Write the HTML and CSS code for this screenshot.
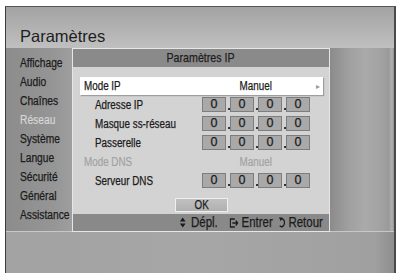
FILE: index.html
```html
<!DOCTYPE html>
<html lang="fr">
<head>
<meta charset="utf-8">
<title>Paramètres IP</title>
<link rel="stylesheet" href="styles.css">
</head>
<body>
<div class="screen">
  <div class="title">Paramètres</div>
  <div class="middle">
    <nav class="menu">
      <div class="item">Affichage</div>
      <div class="item">Audio</div>
      <div class="item">Chaînes</div>
      <div class="item dim">Réseau</div>
      <div class="item">Système</div>
      <div class="item">Langue</div>
      <div class="item">Sécurité</div>
      <div class="item">Général</div>
      <div class="item">Assistance</div>
    </nav>
    <div class="dialog">
      <div class="dlg-head"><span class="cond mid">Paramètres IP</span></div>
      <div class="dlg-body">
        <div class="row mode">
          <span class="label"><span class="cond">Mode IP</span></span>
          <span class="value"><span class="cond mid">Manuel</span></span>
          <span class="arrow">&#9656;</span>
        </div>
        <div class="row ip">
          <span class="label sub"><span class="cond">Adresse IP</span></span>
          <span class="boxes"><span class="box">0</span><span class="box">0</span><span class="box">0</span><span class="box">0</span></span>
        </div>
        <div class="row ip">
          <span class="label sub"><span class="cond">Masque ss-réseau</span></span>
          <span class="boxes"><span class="box">0</span><span class="box">0</span><span class="box">0</span><span class="box">0</span></span>
        </div>
        <div class="row ip">
          <span class="label sub"><span class="cond">Passerelle</span></span>
          <span class="boxes"><span class="box">0</span><span class="box">0</span><span class="box">0</span><span class="box">0</span></span>
        </div>
        <div class="row ip disabled">
          <span class="label"><span class="cond">Mode DNS</span></span>
          <span class="value"><span class="cond mid">Manuel</span></span>
        </div>
        <div class="row ip">
          <span class="label sub"><span class="cond">Serveur DNS</span></span>
          <span class="boxes"><span class="box">0</span><span class="box">0</span><span class="box">0</span><span class="box">0</span></span>
        </div>
        <div class="ok"><span class="cond mid">OK</span></div>
      </div>
      <div class="dlg-foot">
        <div class="foot-inner">
          <span class="hint move">
            <svg class="ico" width="8" height="11" viewBox="0 0 8 11"><path d="M4 0.5 L7.5 4.5 L0.5 4.5 Z M0.5 6.5 L7.5 6.5 L4 10.5 Z" fill="#1c1c1c"/></svg>
            Dépl.
          </span>
          <span class="hint enter">
            <svg class="ico" width="11" height="10" viewBox="0 0 11 10"><path d="M6.5 1 H1 V9 H6.5" fill="none" stroke="#1c1c1c" stroke-width="1.5"/><path d="M3.5 5 H10 M7.6 2.5 L10 5 L7.6 7.5" fill="none" stroke="#1c1c1c" stroke-width="1.5"/></svg>
            Entrer
          </span>
          <span class="hint back">
            <svg class="ico" width="8" height="11" viewBox="0 0 8 11"><path d="M2.6 1.8 A3.6 4 0 1 1 1.2 8.8" fill="none" stroke="#1c1c1c" stroke-width="1.5"/><path d="M0.3 0.6 L4.6 0.4 L2.6 4.2 Z" fill="#1c1c1c"/></svg>
            Retour
          </span>
        </div>
      </div>
    </div>
    <div class="side-right"></div>
  </div>
  <div class="bottom"></div>
</div>
</body>
</html>
```

FILE: styles.css
```css
* { box-sizing: border-box; }
html, body { margin: 0; padding: 0; background: #ffffff; }
body { width: 401px; height: 273px; overflow: hidden; }

.screen {
  margin: 6px 0 0 5px;
  width: 391px;
  height: 267px;
  border-left: 1px solid #3c3c3c;
  border-right: 2px solid #4a4a4a;
  border-top: 1px solid #555555;
  display: flex;
  flex-direction: column;
  font-family: "Liberation Sans", Arial, sans-serif;
  color: #1b1b1b;
}

/* condensed lettering (Helvetica Condensed look) */
.cond {
  display: inline-block;
  transform: scaleX(0.82);
  transform-origin: left center;
}
.cond.mid { transform-origin: center center; }

.title {
  height: 41px;
  padding: 20px 0 0 14px;
  font-size: 16.5px;
  line-height: 18px;
  color: #1e1e1e;
  background: linear-gradient(#a3a3a3, #b4b4b4 60%, #c0c0c0);
}

.middle {
  height: 183px;
  display: flex;
  align-items: flex-start;
}

.menu {
  width: 66px;
  height: 183px;
  padding: 6px 0 0 14px;
  background: linear-gradient(to right, #8c8c8c, #959595 70%, #9e9e9e);
  font-size: 12.5px;
  line-height: 19px;
  white-space: nowrap;
  -webkit-text-stroke: 0.25px #1b1b1b;
}
.item {
  transform: scaleX(0.82);
  transform-origin: left center;
}
.item.dim { color: #d6d6d6; -webkit-text-stroke: 0.2px #d6d6d6; }

.dialog {
  position: relative;
  z-index: 1;
  width: 258px;
  height: 184px;
  border: 1px solid #e6e6e6;
  background: #d3d3d3;
  display: flex;
  flex-direction: column;
}

.dlg-head {
  height: 18px;
  background: #8a8a8a;
  text-align: center;
  font-size: 13px;
  line-height: 18px;
  color: #1e1e1e;
  -webkit-text-stroke: 0.25px #1e1e1e;
}

.dlg-body {
  padding: 10px 6px 0 7px;
  font-size: 12px;
  -webkit-text-stroke: 0.25px #1b1b1b;
}

.row {
  display: grid;
  grid-template-columns: 122px 108px 1fr;
  align-items: center;
  height: 19px;
  white-space: nowrap;
}
.row.mode {
  height: 18px;
  background: #ffffff;
  box-shadow: 1px 1px 1px rgba(0,0,0,0.25);
}
.label { padding-left: 4px; }
.label.sub { padding-left: 15px; }
.value { text-align: center; }
.arrow {
  text-align: right;
  padding-right: 3px;
  font-size: 8px;
  color: #9a9a9a;
  -webkit-text-stroke: 0;
}
.row.disabled { color: #a2a2a2; -webkit-text-stroke: 0.2px #a2a2a2; }

.boxes {
  display: flex;
  gap: 4px;
}
.box {
  position: relative;
  width: 24px;
  height: 15px;
  background: #a9a9a9;
  border: 1px solid #7d7d7d;
  text-align: center;
  line-height: 13px;
  font-size: 12.5px;
}
.box + .box::before {
  content: "";
  position: absolute;
  left: -3.5px;
  bottom: 1px;
  width: 2px;
  height: 2px;
  background: #333333;
}

.ok {
  margin: 8px auto 0;
  width: 53px;
  height: 14px;
  background: linear-gradient(#c0c0c0, #b0b0b0);
  border: 1px solid #efefef;
  text-align: center;
  font-size: 12px;
  line-height: 12px;
}

.dlg-foot {
  margin-top: auto;
  height: 17px;
  background: #898989;
  display: flex;
  justify-content: flex-end;
  padding-right: 6px;
  font-size: 14px;
  line-height: 17px;
  white-space: nowrap;
  -webkit-text-stroke: 0.25px #1b1b1b;
}
.foot-inner {
  display: flex;
  align-items: center;
  transform: scaleX(0.82);
  transform-origin: right center;
}
.hint { display: flex; align-items: center; gap: 3.5px; }
.hint.move { gap: 6px; }
.hint.enter { margin-left: 14.5px; }
.hint.back { margin-left: 7.5px; }
.ico { display: block; }

.side-right {
  flex: 1;
  height: 183px;
  background: linear-gradient(to right, #8b8b8b 0%, #a0a0a0 30%, #aaaaaa 55%, #a2a2a2 80%, #9a9a9a 92%, #b2b2b2 97%, #8c8c8c 100%);
}

.bottom {
  flex: 1;
  border-top: 1px solid #c8c8c8;
  background: linear-gradient(to right, #a2a2a2, #a6a6a6 50%, #a0a0a0 95%, #8e8e8e);
}
```
